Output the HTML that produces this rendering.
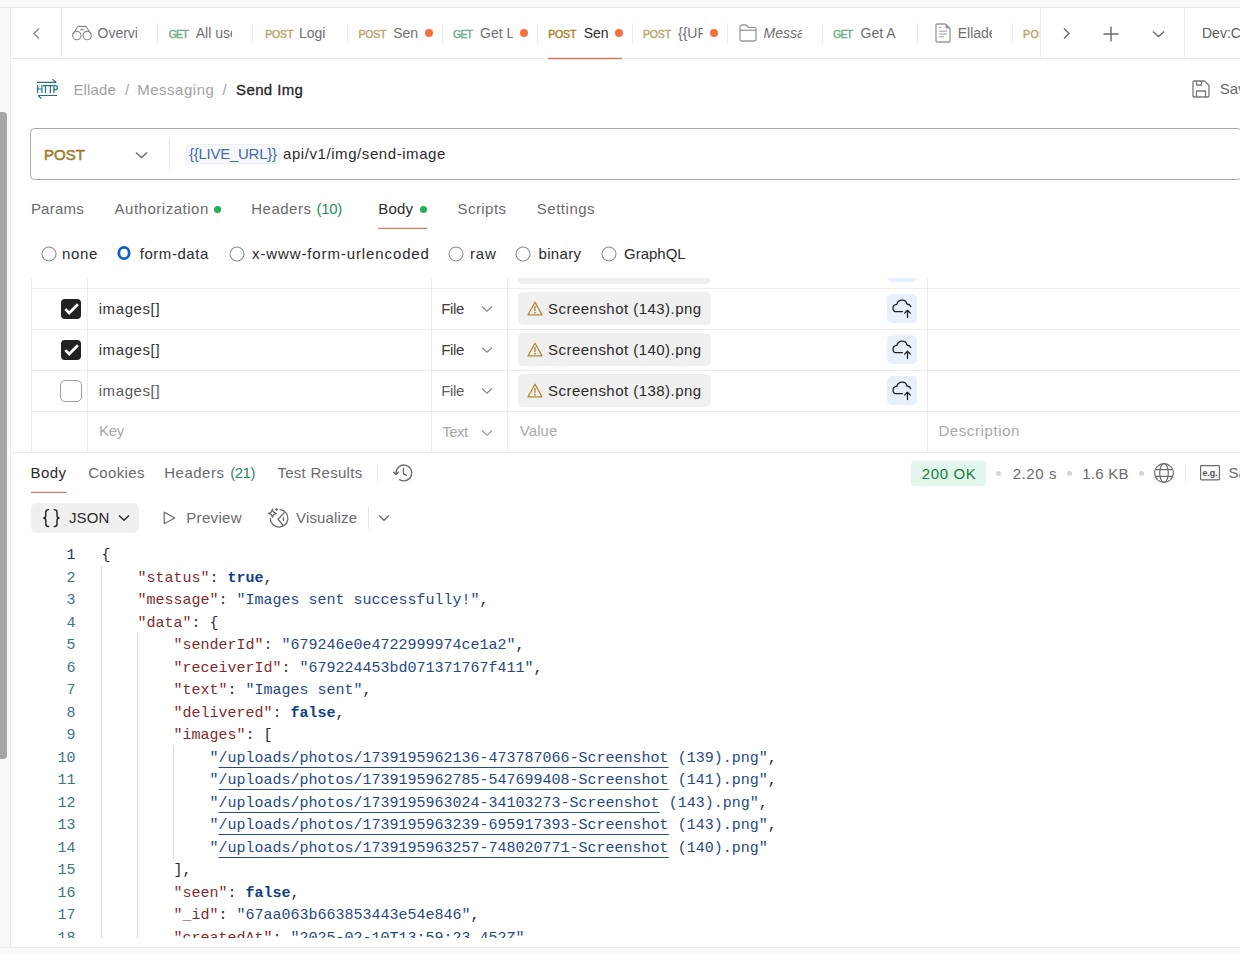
<!DOCTYPE html>
<html><head><meta charset="utf-8"><style>
*{box-sizing:border-box;margin:0;padding:0}
html,body{width:1240px;height:954px;overflow:hidden;background:#fff;font-family:"Liberation Sans",sans-serif;color:#212121}
.a{position:absolute}
.t{position:absolute;white-space:nowrap;line-height:1}
.mono{font-family:"Liberation Mono",monospace}
svg{overflow:visible}
</style></head><body>
<div class="a" style="left:0px;top:0px;width:1240px;height:8px;background:#f9f9f9"></div>
<div class="a" style="left:0px;top:7px;width:1240px;height:1px;background:#e6e6e6"></div>
<div class="a" style="left:0px;top:8px;width:10px;height:946px;background:#f9f9f9"></div>
<div class="a" style="left:10px;top:8px;width:1px;height:946px;background:#ececec"></div>
<div class="a" style="left:0px;top:112px;width:7px;height:647px;background:#a6a6a6;border-radius:0 4px 4px 0"></div>
<div class="a" style="left:0px;top:947px;width:1240px;height:1px;background:#ececec"></div>
<div class="a" style="left:0px;top:948px;width:1240px;height:6px;background:#f9f9f9"></div>
<div class="a" style="left:11px;top:58px;width:1229px;height:1px;background:#ececec"></div>
<div class="a" style="left:61px;top:8px;width:1px;height:50px;background:#ececec"></div>
<div class="a" style="left:1040px;top:8px;width:1px;height:50px;background:#ececec"></div>
<div class="a" style="left:1184px;top:8px;width:1px;height:50px;background:#ececec"></div>
<div class="a" style="left:157px;top:23px;width:1px;height:21px;background:#ececec"></div>
<div class="a" style="left:252px;top:23px;width:1px;height:21px;background:#ececec"></div>
<div class="a" style="left:347px;top:23px;width:1px;height:21px;background:#ececec"></div>
<div class="a" style="left:442px;top:23px;width:1px;height:21px;background:#ececec"></div>
<div class="a" style="left:537px;top:23px;width:1px;height:21px;background:#ececec"></div>
<div class="a" style="left:632px;top:23px;width:1px;height:21px;background:#ececec"></div>
<div class="a" style="left:727px;top:23px;width:1px;height:21px;background:#ececec"></div>
<div class="a" style="left:822px;top:23px;width:1px;height:21px;background:#ececec"></div>
<div class="a" style="left:917px;top:23px;width:1px;height:21px;background:#ececec"></div>
<div class="a" style="left:1012px;top:23px;width:1px;height:21px;background:#ececec"></div>
<svg class="a" style="left:31px;top:27px;" width="10" height="13" viewBox="0 0 10 13" fill="none"><path d="M8 1.5L3 6.5L8 11.5" stroke="#8a8a8a" stroke-width="1.4"/></svg>
<svg class="a" style="left:72px;top:25px;" width="20" height="16" viewBox="0 0 20 16" fill="none"><g stroke="#8c8c8c" stroke-width="1.15" stroke-linejoin="round"><circle cx="4.8" cy="10.5" r="4.2"/><circle cx="15.2" cy="10.5" r="4.2"/><path d="M0.9 9L6.1 1.3H13.9L19.1 9"/><path d="M8.4 5.2Q10 3.7 11.6 5.2"/></g></svg>
<div class="t " style="left:97.50px;top:22.85px;padding-top:3px;height:20px;width:39.50px;overflow:hidden;font-size:14px;color:#707070;">Overview</div>
<div class="t " style="left:168.70px;top:28.71px;font-size:10.5px;color:#70ad8b;letter-spacing:-0.785px;-webkit-text-stroke:0.45px #70ad8b;">GET</div>
<div class="t " style="left:195.70px;top:22.85px;padding-top:3px;height:20px;width:36.30px;overflow:hidden;font-size:14px;color:#707070;">All users</div>
<div class="t " style="left:265.20px;top:28.71px;font-size:10.5px;color:#bca56f;letter-spacing:-0.158px;-webkit-text-stroke:0.45px #bca56f;">POST</div>
<div class="t " style="left:299.00px;top:22.85px;padding-top:3px;height:20px;width:27.00px;overflow:hidden;font-size:14px;color:#707070;">Login</div>
<div class="t " style="left:358.40px;top:28.71px;font-size:10.5px;color:#bca56f;letter-spacing:-0.158px;-webkit-text-stroke:0.45px #bca56f;">POST</div>
<div class="t " style="left:393.20px;top:22.85px;padding-top:3px;height:20px;width:24.80px;overflow:hidden;font-size:14px;color:#707070;">Send</div>
<div class="a" style="left:425px;top:29px;width:8px;height:8px;background:#f4713f;border-radius:50%"></div>
<div class="t " style="left:453.00px;top:28.71px;font-size:10.5px;color:#70ad8b;letter-spacing:-0.785px;-webkit-text-stroke:0.45px #70ad8b;">GET</div>
<div class="t " style="left:480.00px;top:22.85px;padding-top:3px;height:20px;width:33.00px;overflow:hidden;font-size:14px;color:#707070;">Get L</div>
<div class="a" style="left:520px;top:29px;width:8px;height:8px;background:#f4713f;border-radius:50%"></div>
<div class="t " style="left:548.20px;top:28.71px;font-size:10.5px;color:#a8862c;letter-spacing:-0.158px;-webkit-text-stroke:0.45px #a8862c;">POST</div>
<div class="t " style="left:583.70px;top:22.85px;padding-top:3px;height:20px;width:24.80px;overflow:hidden;font-size:14px;color:#2b2b2b;">Send</div>
<div class="a" style="left:615px;top:29px;width:8px;height:8px;background:#f4713f;border-radius:50%"></div>
<svg class="a" style="left:548px;top:50px;" width="74" height="16" viewBox="0 0 74 16" fill="none"><path d="M0 8.4H74" stroke="#d27a5c" stroke-width="1.5"/></svg>
<div class="t " style="left:643.00px;top:28.71px;font-size:10.5px;color:#bca56f;letter-spacing:-0.158px;-webkit-text-stroke:0.45px #bca56f;">POST</div>
<div class="t " style="left:678.00px;top:22.85px;padding-top:3px;height:20px;width:25.00px;overflow:hidden;font-size:14px;color:#707070;">{{URL</div>
<div class="a" style="left:710px;top:29px;width:8px;height:8px;background:#f4713f;border-radius:50%"></div>
<svg class="a" style="left:739px;top:24px;" width="18" height="18" viewBox="0 0 18 18" fill="none"><g stroke="#9a9a9a" stroke-width="1.3" stroke-linejoin="round"><path d="M1 3.5 Q1 1 3 1 H7 L9 3.3 H15.5 Q17 3.3 17 5 V15 Q17 17 15 17 H3 Q1 17 1 15 Z"/><path d="M1 6.3 H17"/></g></svg>
<div class="t " style="left:763.50px;top:22.85px;padding-top:3px;height:20px;width:38.50px;overflow:hidden;font-size:14px;color:#707070;font-style:italic">Messaging</div>
<div class="t " style="left:833.00px;top:28.71px;font-size:10.5px;color:#70ad8b;letter-spacing:-0.785px;-webkit-text-stroke:0.45px #70ad8b;">GET</div>
<div class="t " style="left:860.60px;top:22.85px;padding-top:3px;height:20px;width:35.60px;overflow:hidden;font-size:14px;color:#707070;">Get All</div>
<svg class="a" style="left:935px;top:23px;" width="16" height="20" viewBox="0 0 16 20" fill="none"><g stroke="#9a9a9a" stroke-width="1.3" stroke-linejoin="round"><path d="M1 2.2 Q1 1 2.2 1 H10.5 L15 5.5 V18.8 Q15 19 13.8 19 H2.2 Q1 19 1 17.8 Z"/></g><path d="M10.5 1 V5.5 H15" fill="#9a9a9a"/><g stroke="#a0a0a0" stroke-width="1"><path d="M4 4.5 H6.5"/><path d="M4 8.2 H12"/><path d="M4 11 H12"/><path d="M4 13.8 H9"/></g></svg>
<div class="t " style="left:957.70px;top:22.85px;padding-top:3px;height:20px;width:34.30px;overflow:hidden;font-size:14px;color:#707070;">Ellade</div>
<div class="t " style="left:1023.00px;top:25.71px;padding-top:3px;height:16.5px;width:17.00px;overflow:hidden;font-size:10.5px;color:#bca56f;-webkit-text-stroke:0.45px #bca56f;letter-spacing:0.6px">POST</div>
<svg class="a" style="left:1062px;top:27px;" width="10" height="13" viewBox="0 0 10 13" fill="none"><path d="M2 1.5L7 6.5L2 11.5" stroke="#6b6b6b" stroke-width="1.4"/></svg>
<svg class="a" style="left:1103px;top:26px;" width="16" height="16" viewBox="0 0 16 16" fill="none"><path d="M8 0.5V15.5M0.5 8H15.5" stroke="#6b6b6b" stroke-width="1.4"/></svg>
<svg class="a" style="left:1152px;top:30px;" width="13" height="8" viewBox="0 0 13 8" fill="none"><path d="M1 1.5L6.5 6.5L12 1.5" stroke="#6b6b6b" stroke-width="1.4"/></svg>
<div class="t " style="left:1202.00px;top:25.85px;font-size:14px;color:#5d5d5d;">Dev:Clone</div>
<svg class="a" style="left:32px;top:74px;" width="32" height="30" viewBox="0 0 32 30" fill="none"><g stroke="#246f83" stroke-width="1.2" fill="none"><path d="M5 8.4H24.3M20.6 5.2L24.1 8.4"/><path d="M6 21.5H25M6.2 21.5L9.4 24.6"/><path d="M5.6 11V19M9.9 11V19M5.6 15H9.9"/><path d="M10.9 11.7H15.9M13.4 11.7V19"/><path d="M15.9 11.7H20.9M18.4 11.7V19"/><path d="M21.9 19V11.7H23.4Q25.3 11.7 25.3 13.7Q25.3 15.7 23.4 15.7H21.9"/></g></svg>
<div class="t " style="left:73.40px;top:82.30px;font-size:15px;color:#a3a3a3;letter-spacing:0.149px;">Ellade</div>
<div class="t " style="left:125.00px;top:82.30px;font-size:15px;color:#a3a3a3;">/</div>
<div class="t " style="left:137.20px;top:82.30px;font-size:15px;color:#a3a3a3;letter-spacing:0.525px;">Messaging</div>
<div class="t " style="left:222.50px;top:82.30px;font-size:15px;color:#a3a3a3;">/</div>
<div class="t " style="left:236.00px;top:82.30px;font-size:15px;color:#262626;letter-spacing:0.391px;-webkit-text-stroke:0.3px #262626;">Send Img</div>
<svg class="a" style="left:1192px;top:80px;" width="18" height="18" viewBox="0 0 18 18" fill="none"><g stroke="#7a7a7a" stroke-width="1.3" stroke-linejoin="round"><path d="M1 2 Q1 1 2 1 H12.5 L17 5.5 V16 Q17 17 16 17 H2 Q1 17 1 16 Z"/><path d="M4.5 1 V5 H9.5 V1"/><path d="M4.5 17 V11 H13.5 V17"/></g></svg>
<div class="t " style="left:1219.70px;top:81.30px;font-size:15px;color:#6b6b6b;">Save</div>
<div class="a" style="left:30px;top:128px;width:1212px;height:52px;border:1px solid #a8a8a8;border-radius:4.5px"></div>
<div class="t " style="left:43.90px;top:147.30px;font-size:15px;color:#9f7c2c;letter-spacing:0.074px;-webkit-text-stroke:0.55px #9f7c2c;">POST</div>
<svg class="a" style="left:135px;top:151px;" width="13" height="8" viewBox="0 0 13 8" fill="none"><path d="M1 1.5L6.5 6.5L12 1.5" stroke="#6b6b6b" stroke-width="1.4"/></svg>
<div class="a" style="left:169px;top:139px;width:1px;height:30px;background:#e6e6e6"></div>
<div class="a" style="left:186px;top:144px;width:94px;height:20px;background:#f7f8fa;border:1px solid #eceef2;border-radius:4px"></div>
<div class="t " style="left:189.00px;top:146.30px;font-size:15px;color:#3e6cb2;letter-spacing:-0.263px;">{{LIVE_URL}}</div>
<div class="t " style="left:283.00px;top:146.30px;font-size:15px;color:#2b2b2b;letter-spacing:0.572px;">api/v1/img/send-image</div>
<div class="t " style="left:30.90px;top:201.30px;font-size:15px;color:#6b6b6b;letter-spacing:0.224px;">Params</div>
<div class="t " style="left:114.50px;top:201.30px;font-size:15px;color:#6b6b6b;letter-spacing:0.516px;">Authorization</div>
<div class="a" style="left:214px;top:206px;width:7px;height:7px;background:#1cb35a;border-radius:50%"></div>
<div class="t " style="left:251.30px;top:201.30px;font-size:15px;color:#6b6b6b;letter-spacing:0.484px;">Headers</div>
<div class="t " style="left:316.40px;top:201.30px;font-size:15px;color:#2d8a57;letter-spacing:-0.260px;">(10)</div>
<div class="t " style="left:378.30px;top:201.30px;font-size:15px;color:#2b2b2b;letter-spacing:0.170px;">Body</div>
<div class="a" style="left:420px;top:206px;width:7px;height:7px;background:#1cb35a;border-radius:50%"></div>
<svg class="a" style="left:378px;top:220px;" width="49" height="16" viewBox="0 0 49 16" fill="none"><path d="M0 8.4H49" stroke="#d67b5c" stroke-width="1.4"/></svg>
<div class="t " style="left:457.50px;top:201.30px;font-size:15px;color:#6b6b6b;letter-spacing:0.443px;">Scripts</div>
<div class="t " style="left:536.80px;top:201.30px;font-size:15px;color:#6b6b6b;letter-spacing:0.514px;">Settings</div>
<svg class="a" style="left:38.5px;top:243.5px;" width="20" height="20" viewBox="0 0 20 20" fill="none"><circle cx="10" cy="10" r="7" stroke="#8f8f8f" stroke-width="1.1"/></svg>
<div class="t " style="left:62.00px;top:246.30px;font-size:15px;color:#2b2b2b;letter-spacing:0.658px;">none</div>
<svg class="a" style="left:114.45px;top:242.95px;" width="20" height="20" viewBox="0 0 20 20" fill="none"><ellipse cx="10" cy="10" rx="5.15" ry="5.6" stroke="#1160c9" stroke-width="2.8"/></svg>
<div class="t " style="left:139.70px;top:246.30px;font-size:15px;color:#2b2b2b;letter-spacing:0.557px;">form-data</div>
<svg class="a" style="left:227px;top:243.5px;" width="20" height="20" viewBox="0 0 20 20" fill="none"><circle cx="10" cy="10" r="7" stroke="#8f8f8f" stroke-width="1.1"/></svg>
<div class="t " style="left:252.00px;top:246.30px;font-size:15px;color:#2b2b2b;letter-spacing:0.887px;">x-www-form-urlencoded</div>
<svg class="a" style="left:445.7px;top:243.5px;" width="20" height="20" viewBox="0 0 20 20" fill="none"><circle cx="10" cy="10" r="7" stroke="#8f8f8f" stroke-width="1.1"/></svg>
<div class="t " style="left:470.00px;top:246.30px;font-size:15px;color:#2b2b2b;letter-spacing:0.831px;">raw</div>
<svg class="a" style="left:513.2px;top:243.5px;" width="20" height="20" viewBox="0 0 20 20" fill="none"><circle cx="10" cy="10" r="7" stroke="#8f8f8f" stroke-width="1.1"/></svg>
<div class="t " style="left:538.50px;top:246.30px;font-size:15px;color:#2b2b2b;letter-spacing:0.329px;">binary</div>
<svg class="a" style="left:599.1px;top:243.5px;" width="20" height="20" viewBox="0 0 20 20" fill="none"><circle cx="10" cy="10" r="7" stroke="#8f8f8f" stroke-width="1.1"/></svg>
<div class="t " style="left:624.00px;top:246.30px;font-size:15px;color:#2b2b2b;">GraphQL</div>
<div class="a" style="left:11px;top:278px;width:1229px;height:175px;overflow:hidden"><div class="a" style="left:20px;top:-8px;width:1px;height:182px;background:#ececec"></div>
<div class="a" style="left:76px;top:-8px;width:1px;height:182px;background:#ececec"></div>
<div class="a" style="left:420px;top:-8px;width:1px;height:182px;background:#ececec"></div>
<div class="a" style="left:496px;top:-8px;width:1px;height:182px;background:#ececec"></div>
<div class="a" style="left:916px;top:-8px;width:1px;height:182px;background:#ececec"></div>
<div class="a" style="left:20px;top:10px;width:1229px;height:1px;background:#ececec"></div>
<div class="a" style="left:20px;top:51px;width:1229px;height:1px;background:#ececec"></div>
<div class="a" style="left:20px;top:92px;width:1229px;height:1px;background:#ececec"></div>
<div class="a" style="left:20px;top:133px;width:1229px;height:1px;background:#ececec"></div>
<div class="a" style="left:20px;top:174px;width:1229px;height:1px;background:#ececec"></div>
<div class="a" style="left:507px;top:-27px;width:193px;height:33px;background:#f0f0f0;border-radius:5px"></div>
<div class="a" style="left:876px;top:-25px;width:30px;height:29px;background:#e8f0fd;border-radius:5px"></div>
<div class="a" style="left:50px;top:21px;width:20px;height:20px;background:#212121;border-radius:4px"></div>
<svg class="a" style="left:50px;top:21px;" width="20" height="20" viewBox="0 0 20 20" fill="none"><path d="M4.3 10.1L8.2 14L16.9 5.3" stroke="#fff" stroke-width="2.7" stroke-linecap="butt" stroke-linejoin="miter"/></svg>
<div class="t " style="left:87.70px;top:23.00px;font-size:15px;color:#353535;letter-spacing:0.597px;">images[]</div>
<div class="t " style="left:430.20px;top:23.00px;font-size:15px;color:#3b3b3b;letter-spacing:-0.376px;">File</div>
<svg class="a" style="left:470px;top:27.0px;" width="13" height="8" viewBox="0 0 13 8" fill="none"><path d="M1 1.5L6 6.2L11 1.5" stroke="#8a8a8a" stroke-width="1.2"/></svg>
<div class="a" style="left:507px;top:14px;width:193px;height:33px;background:#f0f0f0;border-radius:5px"></div>
<svg class="a" style="left:516px;top:22.5px;" width="16" height="15" viewBox="0 0 16 15" fill="none"><g stroke="#b08a2e" stroke-width="1.3" stroke-linejoin="round"><path d="M8 1.2L15 13.8H1Z"/><path d="M8 5.5V9.5" stroke-linecap="round"/></g><circle cx="8" cy="11.7" r="0.9" fill="#b08a2e"/></svg>
<div class="t " style="left:537.10px;top:23.00px;font-size:15px;color:#2b2b2b;letter-spacing:0.462px;">Screenshot (143).png</div>
<div class="a" style="left:876px;top:16px;width:30px;height:29px;background:#e8f0fd;border-radius:5px"></div>
<svg class="a" style="left:873px;top:12px;" width="36" height="36" viewBox="0 0 36 36" fill="none"><g stroke="#1f1f1f" stroke-width="1.3" stroke-linecap="round" stroke-linejoin="round"><path d="M18.5 21.6H11.6Q9 21.6 9 18.1Q9 14.6 12.8 14.3Q14 10.2 18.2 10.2Q22.1 10.2 23 14Q26.1 14.5 26.8 16.6"/><path d="M23.5 27.6V20.3M20.6 23.1L23.5 20.3L26.4 23.1"/></g></svg>
<div class="a" style="left:50px;top:62px;width:20px;height:20px;background:#212121;border-radius:4px"></div>
<svg class="a" style="left:50px;top:62px;" width="20" height="20" viewBox="0 0 20 20" fill="none"><path d="M4.3 10.1L8.2 14L16.9 5.3" stroke="#fff" stroke-width="2.7" stroke-linecap="butt" stroke-linejoin="miter"/></svg>
<div class="t " style="left:87.70px;top:64.00px;font-size:15px;color:#353535;letter-spacing:0.597px;">images[]</div>
<div class="t " style="left:430.20px;top:64.00px;font-size:15px;color:#3b3b3b;letter-spacing:-0.376px;">File</div>
<svg class="a" style="left:470px;top:68.0px;" width="13" height="8" viewBox="0 0 13 8" fill="none"><path d="M1 1.5L6 6.2L11 1.5" stroke="#8a8a8a" stroke-width="1.2"/></svg>
<div class="a" style="left:507px;top:55px;width:193px;height:33px;background:#f0f0f0;border-radius:5px"></div>
<svg class="a" style="left:516px;top:63.5px;" width="16" height="15" viewBox="0 0 16 15" fill="none"><g stroke="#b08a2e" stroke-width="1.3" stroke-linejoin="round"><path d="M8 1.2L15 13.8H1Z"/><path d="M8 5.5V9.5" stroke-linecap="round"/></g><circle cx="8" cy="11.7" r="0.9" fill="#b08a2e"/></svg>
<div class="t " style="left:537.10px;top:64.00px;font-size:15px;color:#2b2b2b;letter-spacing:0.462px;">Screenshot (140).png</div>
<div class="a" style="left:876px;top:57px;width:30px;height:29px;background:#e8f0fd;border-radius:5px"></div>
<svg class="a" style="left:873px;top:53px;" width="36" height="36" viewBox="0 0 36 36" fill="none"><g stroke="#1f1f1f" stroke-width="1.3" stroke-linecap="round" stroke-linejoin="round"><path d="M18.5 21.6H11.6Q9 21.6 9 18.1Q9 14.6 12.8 14.3Q14 10.2 18.2 10.2Q22.1 10.2 23 14Q26.1 14.5 26.8 16.6"/><path d="M23.5 27.6V20.3M20.6 23.1L23.5 20.3L26.4 23.1"/></g></svg>
<div class="a" style="left:49px;top:102px;width:22px;height:22px;border:1.2px solid #9f9f9f;border-radius:5px;background:#fff"></div>
<div class="t " style="left:87.70px;top:105.00px;font-size:15px;color:#585858;letter-spacing:0.597px;">images[]</div>
<div class="t " style="left:430.20px;top:105.00px;font-size:15px;color:#5f5f5f;letter-spacing:-0.376px;">File</div>
<svg class="a" style="left:470px;top:109.0px;" width="13" height="8" viewBox="0 0 13 8" fill="none"><path d="M1 1.5L6 6.2L11 1.5" stroke="#8a8a8a" stroke-width="1.2"/></svg>
<div class="a" style="left:507px;top:96px;width:193px;height:33px;background:#f0f0f0;border-radius:5px"></div>
<svg class="a" style="left:516px;top:104.5px;" width="16" height="15" viewBox="0 0 16 15" fill="none"><g stroke="#b08a2e" stroke-width="1.3" stroke-linejoin="round"><path d="M8 1.2L15 13.8H1Z"/><path d="M8 5.5V9.5" stroke-linecap="round"/></g><circle cx="8" cy="11.7" r="0.9" fill="#b08a2e"/></svg>
<div class="t " style="left:537.10px;top:105.00px;font-size:15px;color:#2b2b2b;letter-spacing:0.462px;">Screenshot (138).png</div>
<div class="a" style="left:876px;top:98px;width:30px;height:29px;background:#e8f0fd;border-radius:5px"></div>
<svg class="a" style="left:873px;top:94px;" width="36" height="36" viewBox="0 0 36 36" fill="none"><g stroke="#1f1f1f" stroke-width="1.3" stroke-linecap="round" stroke-linejoin="round"><path d="M18.5 21.6H11.6Q9 21.6 9 18.1Q9 14.6 12.8 14.3Q14 10.2 18.2 10.2Q22.1 10.2 23 14Q26.1 14.5 26.8 16.6"/><path d="M23.5 27.6V20.3M20.6 23.1L23.5 20.3L26.4 23.1"/></g></svg>
<div class="t " style="left:88.00px;top:145.20px;font-size:15px;color:#a8a8a8;letter-spacing:-0.274px;">Key</div>
<div class="t " style="left:431.30px;top:146.00px;font-size:15px;color:#a8a8a8;letter-spacing:-0.547px;">Text</div>
<svg class="a" style="left:470px;top:150.5px;" width="13" height="8" viewBox="0 0 13 8" fill="none"><path d="M1 1.5L6 6.2L11 1.5" stroke="#9a9a9a" stroke-width="1.2"/></svg>
<div class="t " style="left:508.70px;top:145.20px;font-size:15px;color:#a8a8a8;letter-spacing:0.123px;">Value</div>
<div class="t " style="left:927.40px;top:145.20px;font-size:15px;color:#a8a8a8;letter-spacing:0.601px;">Description</div>
</div><div class="a" style="left:11px;top:452px;width:1229px;height:1px;background:#e8e8e8"></div>
<div class="t " style="left:30.50px;top:465.30px;font-size:15px;color:#2b2b2b;letter-spacing:0.470px;">Body</div>
<svg class="a" style="left:31px;top:484px;" width="36" height="16" viewBox="0 0 36 16" fill="none"><path d="M0 8.4H35.6" stroke="#d67b5c" stroke-width="1.4"/></svg>
<div class="t " style="left:88.20px;top:465.30px;font-size:15px;color:#6b6b6b;letter-spacing:0.351px;">Cookies</div>
<div class="t " style="left:164.20px;top:465.30px;font-size:15px;color:#6b6b6b;letter-spacing:0.517px;">Headers</div>
<div class="t " style="left:230.20px;top:465.30px;font-size:15px;color:#2d8a57;letter-spacing:-0.493px;">(21)</div>
<div class="t " style="left:277.40px;top:465.30px;font-size:15px;color:#6b6b6b;letter-spacing:0.282px;">Test Results</div>
<div class="a" style="left:377px;top:466px;width:1px;height:15px;background:#e6e6e6"></div>
<svg class="a" style="left:388px;top:458px;" width="30" height="30" viewBox="0 0 30 30" fill="none"><g stroke="#6b6b6b" stroke-width="1.35" fill="none" stroke-linecap="round" stroke-linejoin="round"><path d="M8 15.6A7.9 7.9 0 1 1 11.6 21.6"/><path d="M5.6 14.2L8 16.4L10.4 14.2"/><path d="M15.4 10.2V15.6L18.4 17.4"/></g></svg>
<div class="a" style="left:911px;top:461px;width:75px;height:25px;background:#e3f8ec;border-radius:4px"></div>
<div class="t " style="left:921.80px;top:466.30px;font-size:15px;color:#1a7a40;letter-spacing:0.608px;">200 OK</div>
<div class="a" style="left:995.5px;top:470.5px;width:5px;height:5px;background:#d6d6d6;border-radius:50%"></div>
<div class="a" style="left:1066.5px;top:470.5px;width:5px;height:5px;background:#d6d6d6;border-radius:50%"></div>
<div class="a" style="left:1138.5px;top:470.5px;width:5px;height:5px;background:#d6d6d6;border-radius:50%"></div>
<div class="t " style="left:1012.70px;top:466.30px;font-size:15px;color:#6b6b6b;letter-spacing:0.588px;">2.20 s</div>
<div class="t " style="left:1082.30px;top:466.30px;font-size:15px;color:#6b6b6b;letter-spacing:0.235px;">1.6 KB</div>
<svg class="a" style="left:1154px;top:463px;" width="20" height="20" viewBox="0 0 20 20" fill="none"><g stroke="#6b6b6b" stroke-width="1.2"><circle cx="10" cy="10" r="9.4"/><ellipse cx="10" cy="10" rx="4.3" ry="9.4"/><path d="M2 6.6H18M2 13.4H18"/></g></svg>
<div class="a" style="left:1185px;top:466px;width:1px;height:15px;background:#e6e6e6"></div>
<svg class="a" style="left:1200px;top:465px;" width="20" height="17" viewBox="0 0 20 17" fill="none"><rect x="0.6" y="0.6" width="18.8" height="14.2" rx="0.8" stroke="#6b6b6b" stroke-width="1.2"/><text x="9.8" y="10.6" text-anchor="middle" font-family="Liberation Sans" font-size="9.6" font-weight="bold" fill="#5a5a5a" letter-spacing="-0.4">e.g.</text></svg>
<div class="t " style="left:1228.60px;top:465.30px;font-size:15px;color:#6b6b6b;">Save Response</div>
<div class="a" style="left:31px;top:503px;width:108px;height:30px;background:#f0f0f0;border-radius:6px"></div>
<svg class="a" style="left:36px;top:504px;" width="28" height="28" viewBox="0 0 28 28" fill="none"><g stroke="#222" stroke-width="1.45" fill="none" stroke-linecap="round"><path d="M12.6 5.6Q9.8 5.6 9.8 8.2V11.6Q9.8 13.9 7.3 13.9Q9.8 13.9 9.8 16.2V19.9Q9.8 22.5 12.6 22.5"/><path d="M18.2 5.6Q21 5.6 21 8.2V11.6Q21 13.9 23.5 13.9Q21 13.9 21 16.2V19.9Q21 22.5 18.2 22.5"/></g></svg>
<div class="t " style="left:69.00px;top:510.30px;font-size:15px;color:#2b2b2b;letter-spacing:0.076px;">JSON</div>
<svg class="a" style="left:118px;top:514px;" width="12" height="8" viewBox="0 0 12 8" fill="none"><path d="M1 1.5L6 6.2L11 1.5" stroke="#2b2b2b" stroke-width="1.5"/></svg>
<svg class="a" style="left:163px;top:511px;" width="13" height="14" viewBox="0 0 13 14" fill="none"><path d="M1.2 1.2V12.8L11.8 7Z" stroke="#6b6b6b" stroke-width="1.2" stroke-linejoin="round"/></svg>
<div class="t " style="left:186.30px;top:510.30px;font-size:15px;color:#6b6b6b;letter-spacing:0.314px;">Preview</div>
<svg class="a" style="left:264px;top:504px;" width="30" height="28" viewBox="0 0 30 28" fill="none"><g stroke="#6b6b6b" stroke-width="1.35" fill="none" stroke-linecap="round" stroke-linejoin="round"><path d="M16 5.6A8.8 8.8 0 1 1 6.3 14.4"/><path d="M20.2 8.6L14 15.2L19 21.2"/><path d="M19.4 13.6V16.4"/><path d="M8.4 5.2Q8.9 8.8 12.3 9.3Q8.9 9.8 8.4 13.2Q7.9 9.8 4.5 9.3Q7.9 8.8 8.4 5.2Z"/><path d="M12.5 4.6L13.2 5.4L12.5 6.2L11.8 5.4Z" fill="#6b6b6b"/></g></svg>
<div class="t " style="left:296.00px;top:510.30px;font-size:15px;color:#6b6b6b;letter-spacing:0.160px;">Visualize</div>
<div class="a" style="left:368px;top:507px;width:1px;height:22px;background:#e6e6e6"></div>
<svg class="a" style="left:378px;top:514px;" width="12" height="8" viewBox="0 0 12 8" fill="none"><path d="M1 1.5L6 6.2L11 1.5" stroke="#6b6b6b" stroke-width="1.4"/></svg>
<div class="a mono" style="left:11px;top:540px;width:1229px;height:398px;overflow:hidden;font-size:15px;line-height:22.5px"><div class="a" style="left:90px;top:26px;width:1px;height:400px;background:#d9d9d9"></div>
<div class="a" style="left:126px;top:93px;width:1px;height:400px;background:#d9d9d9"></div>
<div class="a" style="left:162px;top:206px;width:1px;height:113px;background:#d9d9d9"></div>
<div class="a" style="left:27.5px;top:5.0px;width:37px;text-align:right;color:#25365e">1</div>
<div class="a" style="left:90.5px;top:5.0px;white-space:nowrap"><span style="color:#2b2b2b">{</span></div>
<div class="a" style="left:27.5px;top:27.5px;width:37px;text-align:right;color:#3d7585">2</div>
<div class="a" style="left:90.5px;top:27.5px;white-space:nowrap">&nbsp;&nbsp;&nbsp;&nbsp;<span style="color:#7f2c2e">&quot;status&quot;</span><span style="color:#2b2b2b">:&nbsp;</span><span style="color:#103f86;font-weight:bold">true</span><span style="color:#2b2b2b">,</span></div>
<div class="a" style="left:27.5px;top:50.0px;width:37px;text-align:right;color:#3d7585">3</div>
<div class="a" style="left:90.5px;top:50.0px;white-space:nowrap">&nbsp;&nbsp;&nbsp;&nbsp;<span style="color:#7f2c2e">&quot;message&quot;</span><span style="color:#2b2b2b">:&nbsp;</span><span style="color:#27497f">&quot;Images&nbsp;sent&nbsp;successfully!&quot;</span><span style="color:#2b2b2b">,</span></div>
<div class="a" style="left:27.5px;top:72.5px;width:37px;text-align:right;color:#3d7585">4</div>
<div class="a" style="left:90.5px;top:72.5px;white-space:nowrap">&nbsp;&nbsp;&nbsp;&nbsp;<span style="color:#7f2c2e">&quot;data&quot;</span><span style="color:#2b2b2b">:&nbsp;{</span></div>
<div class="a" style="left:27.5px;top:95.0px;width:37px;text-align:right;color:#3d7585">5</div>
<div class="a" style="left:90.5px;top:95.0px;white-space:nowrap">&nbsp;&nbsp;&nbsp;&nbsp;&nbsp;&nbsp;&nbsp;&nbsp;<span style="color:#7f2c2e">&quot;senderId&quot;</span><span style="color:#2b2b2b">:&nbsp;</span><span style="color:#27497f">&quot;679246e0e4722999974ce1a2&quot;</span><span style="color:#2b2b2b">,</span></div>
<div class="a" style="left:27.5px;top:117.5px;width:37px;text-align:right;color:#3d7585">6</div>
<div class="a" style="left:90.5px;top:117.5px;white-space:nowrap">&nbsp;&nbsp;&nbsp;&nbsp;&nbsp;&nbsp;&nbsp;&nbsp;<span style="color:#7f2c2e">&quot;receiverId&quot;</span><span style="color:#2b2b2b">:&nbsp;</span><span style="color:#27497f">&quot;679224453bd071371767f411&quot;</span><span style="color:#2b2b2b">,</span></div>
<div class="a" style="left:27.5px;top:140.0px;width:37px;text-align:right;color:#3d7585">7</div>
<div class="a" style="left:90.5px;top:140.0px;white-space:nowrap">&nbsp;&nbsp;&nbsp;&nbsp;&nbsp;&nbsp;&nbsp;&nbsp;<span style="color:#7f2c2e">&quot;text&quot;</span><span style="color:#2b2b2b">:&nbsp;</span><span style="color:#27497f">&quot;Images&nbsp;sent&quot;</span><span style="color:#2b2b2b">,</span></div>
<div class="a" style="left:27.5px;top:162.5px;width:37px;text-align:right;color:#3d7585">8</div>
<div class="a" style="left:90.5px;top:162.5px;white-space:nowrap">&nbsp;&nbsp;&nbsp;&nbsp;&nbsp;&nbsp;&nbsp;&nbsp;<span style="color:#7f2c2e">&quot;delivered&quot;</span><span style="color:#2b2b2b">:&nbsp;</span><span style="color:#103f86;font-weight:bold">false</span><span style="color:#2b2b2b">,</span></div>
<div class="a" style="left:27.5px;top:185.0px;width:37px;text-align:right;color:#3d7585">9</div>
<div class="a" style="left:90.5px;top:185.0px;white-space:nowrap">&nbsp;&nbsp;&nbsp;&nbsp;&nbsp;&nbsp;&nbsp;&nbsp;<span style="color:#7f2c2e">&quot;images&quot;</span><span style="color:#2b2b2b">:&nbsp;[</span></div>
<div class="a" style="left:27.5px;top:207.5px;width:37px;text-align:right;color:#3d7585">10</div>
<div class="a" style="left:90.5px;top:207.5px;white-space:nowrap">&nbsp;&nbsp;&nbsp;&nbsp;&nbsp;&nbsp;&nbsp;&nbsp;&nbsp;&nbsp;&nbsp;&nbsp;<span style="color:#27497f">&quot;</span><span style="color:#27497f;text-decoration:underline;text-decoration-skip-ink:none;text-underline-offset:4.5px;text-decoration-thickness:1.4px">/uploads/photos/1739195962136-473787066-Screenshot</span><span style="color:#27497f">&nbsp;(139).png&quot;</span><span style="color:#2b2b2b">,</span></div>
<div class="a" style="left:27.5px;top:230.0px;width:37px;text-align:right;color:#3d7585">11</div>
<div class="a" style="left:90.5px;top:230.0px;white-space:nowrap">&nbsp;&nbsp;&nbsp;&nbsp;&nbsp;&nbsp;&nbsp;&nbsp;&nbsp;&nbsp;&nbsp;&nbsp;<span style="color:#27497f">&quot;</span><span style="color:#27497f;text-decoration:underline;text-decoration-skip-ink:none;text-underline-offset:4.5px;text-decoration-thickness:1.4px">/uploads/photos/1739195962785-547699408-Screenshot</span><span style="color:#27497f">&nbsp;(141).png&quot;</span><span style="color:#2b2b2b">,</span></div>
<div class="a" style="left:27.5px;top:252.5px;width:37px;text-align:right;color:#3d7585">12</div>
<div class="a" style="left:90.5px;top:252.5px;white-space:nowrap">&nbsp;&nbsp;&nbsp;&nbsp;&nbsp;&nbsp;&nbsp;&nbsp;&nbsp;&nbsp;&nbsp;&nbsp;<span style="color:#27497f">&quot;</span><span style="color:#27497f;text-decoration:underline;text-decoration-skip-ink:none;text-underline-offset:4.5px;text-decoration-thickness:1.4px">/uploads/photos/1739195963024-34103273-Screenshot</span><span style="color:#27497f">&nbsp;(143).png&quot;</span><span style="color:#2b2b2b">,</span></div>
<div class="a" style="left:27.5px;top:275.0px;width:37px;text-align:right;color:#3d7585">13</div>
<div class="a" style="left:90.5px;top:275.0px;white-space:nowrap">&nbsp;&nbsp;&nbsp;&nbsp;&nbsp;&nbsp;&nbsp;&nbsp;&nbsp;&nbsp;&nbsp;&nbsp;<span style="color:#27497f">&quot;</span><span style="color:#27497f;text-decoration:underline;text-decoration-skip-ink:none;text-underline-offset:4.5px;text-decoration-thickness:1.4px">/uploads/photos/1739195963239-695917393-Screenshot</span><span style="color:#27497f">&nbsp;(143).png&quot;</span><span style="color:#2b2b2b">,</span></div>
<div class="a" style="left:27.5px;top:297.5px;width:37px;text-align:right;color:#3d7585">14</div>
<div class="a" style="left:90.5px;top:297.5px;white-space:nowrap">&nbsp;&nbsp;&nbsp;&nbsp;&nbsp;&nbsp;&nbsp;&nbsp;&nbsp;&nbsp;&nbsp;&nbsp;<span style="color:#27497f">&quot;</span><span style="color:#27497f;text-decoration:underline;text-decoration-skip-ink:none;text-underline-offset:4.5px;text-decoration-thickness:1.4px">/uploads/photos/1739195963257-748020771-Screenshot</span><span style="color:#27497f">&nbsp;(140).png&quot;</span></div>
<div class="a" style="left:27.5px;top:320.0px;width:37px;text-align:right;color:#3d7585">15</div>
<div class="a" style="left:90.5px;top:320.0px;white-space:nowrap">&nbsp;&nbsp;&nbsp;&nbsp;&nbsp;&nbsp;&nbsp;&nbsp;<span style="color:#2b2b2b">],</span></div>
<div class="a" style="left:27.5px;top:342.5px;width:37px;text-align:right;color:#3d7585">16</div>
<div class="a" style="left:90.5px;top:342.5px;white-space:nowrap">&nbsp;&nbsp;&nbsp;&nbsp;&nbsp;&nbsp;&nbsp;&nbsp;<span style="color:#7f2c2e">&quot;seen&quot;</span><span style="color:#2b2b2b">:&nbsp;</span><span style="color:#103f86;font-weight:bold">false</span><span style="color:#2b2b2b">,</span></div>
<div class="a" style="left:27.5px;top:365.0px;width:37px;text-align:right;color:#3d7585">17</div>
<div class="a" style="left:90.5px;top:365.0px;white-space:nowrap">&nbsp;&nbsp;&nbsp;&nbsp;&nbsp;&nbsp;&nbsp;&nbsp;<span style="color:#7f2c2e">&quot;_id&quot;</span><span style="color:#2b2b2b">:&nbsp;</span><span style="color:#27497f">&quot;67aa063b663853443e54e846&quot;</span><span style="color:#2b2b2b">,</span></div>
<div class="a" style="left:27.5px;top:387.5px;width:37px;text-align:right;color:#3d7585">18</div>
<div class="a" style="left:90.5px;top:387.5px;white-space:nowrap">&nbsp;&nbsp;&nbsp;&nbsp;&nbsp;&nbsp;&nbsp;&nbsp;<span style="color:#7f2c2e">&quot;createdAt&quot;</span><span style="color:#2b2b2b">:&nbsp;</span><span style="color:#27497f">&quot;2025-02-10T13:59:23.452Z&quot;</span><span style="color:#2b2b2b">,</span></div>
</div></body></html>
